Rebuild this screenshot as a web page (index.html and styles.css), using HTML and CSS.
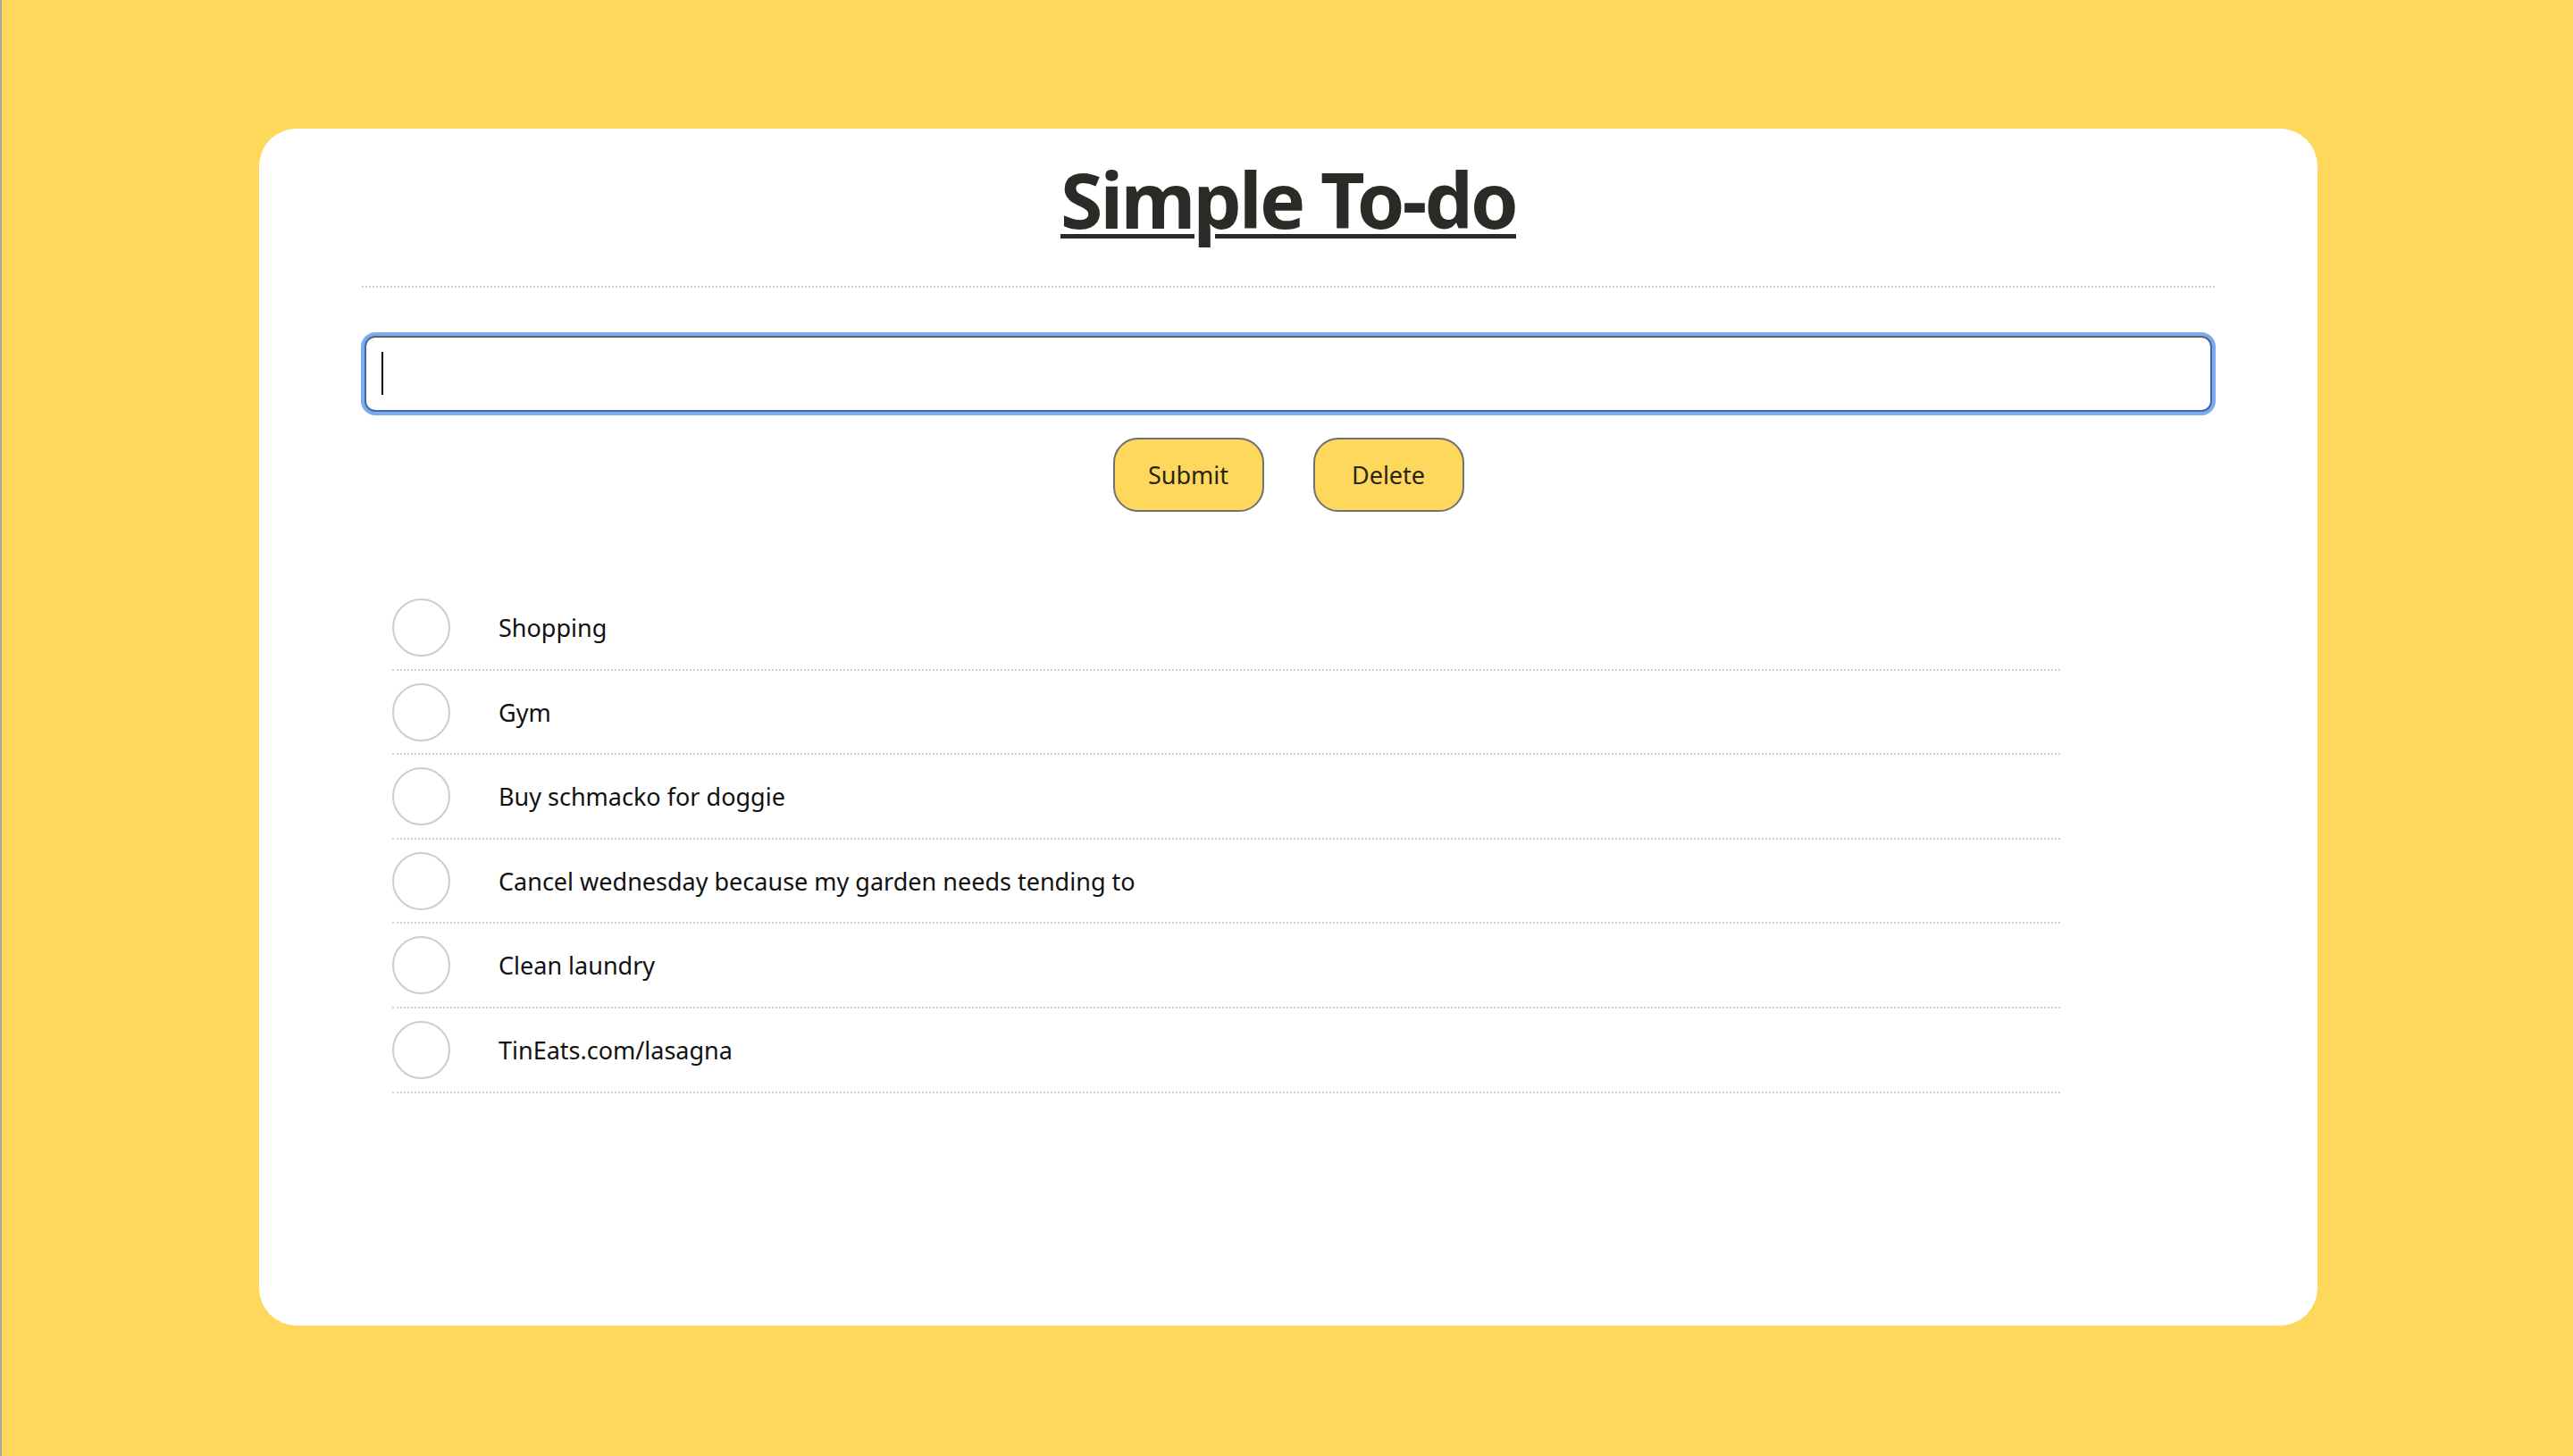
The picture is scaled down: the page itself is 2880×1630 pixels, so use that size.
FILE: index.html
```html
<!DOCTYPE html>
<html lang="en">
<head>
<meta charset="utf-8">
<title>Simple To-do</title>
<link rel="stylesheet" href="styles.css">
</head>
<body>
<main class="card">
  <h1 class="title">Simple To-do</h1>
  <div class="rule"></div>
  <div class="field">
    <input class="todo-input" type="text" aria-label="New to-do">
    <span class="caret"></span>
  </div>
  <div class="actions">
    <button class="btn" type="button">Submit</button>
    <button class="btn" type="button">Delete</button>
  </div>
  <ul class="list">
    <li class="item"><span class="check"></span><span class="label">Shopping</span></li>
    <li class="item"><span class="check"></span><span class="label">Gym</span></li>
    <li class="item"><span class="check"></span><span class="label">Buy schmacko for doggie</span></li>
    <li class="item"><span class="check"></span><span class="label">Cancel wednesday because my garden needs tending to</span></li>
    <li class="item"><span class="check"></span><span class="label">Clean laundry</span></li>
    <li class="item"><span class="check"></span><span class="label">TinEats.com/lasagna</span></li>
  </ul>
</main>
</body>
</html>
```

FILE: styles.css
```css
* { box-sizing: border-box; }

html, body {
  margin: 0;
  padding: 0;
}

body {
  background: #fed85d;
  font-family: "Noto Sans", "DejaVu Sans", sans-serif;
  color: #111;
  height: 1630px;
  overflow: hidden;
  padding-top: 144px;
  box-shadow: inset 2px 0 #a9a9a9;
}

.card {
  width: 2304px;
  height: 1340px;
  margin: 0 0 0 290px;
  background: #fff;
  border-radius: 42px;
  padding: 19px 115px 0;
}

.title {
  margin: 0;
  text-align: center;
  font-size: 86px;
  line-height: 120px;
  font-weight: 700;
  letter-spacing: -2.8px;
  color: #2c2a27;
  text-decoration: underline;
  text-decoration-thickness: 5px;
  text-underline-offset: 6px;
}

.rule {
  margin-top: 37px;
  border-top: 2px dotted #cfcfcf;
}

.field {
  position: relative;
  margin: 54px 3px 0;
}

.todo-input {
  display: block;
  width: 100%;
  height: 85px;
  border: 2px solid #3f6aaa;
  border-top-color: #5c6068;
  border-radius: 12px;
  box-shadow: 0 0 0 4px #7eabf0;
  outline: none;
  background: #fff;
  font: 40px "Noto Sans", sans-serif;
  padding: 0 18px;
}

.caret {
  position: absolute;
  left: 19px;
  top: 18px;
  width: 2px;
  height: 48px;
  background: #000;
}

.actions {
  display: flex;
  justify-content: center;
  gap: 55px;
  margin-top: 29px;
}

.btn {
  width: 169px;
  height: 83px;
  border: 2px solid #717171;
  border-radius: 28px;
  background: #fed85d;
  color: #2a2414;
  font-family: "Noto Sans", sans-serif;
  font-size: 27px;
  padding: 0;
}

.list {
  list-style: none;
  margin: 83px 0 0 34px;
  padding: 0;
  width: 90%;
}

.item {
  display: flex;
  align-items: center;
  gap: 54px;
  padding: 14px 0 13.6px;
  border-bottom: 2px dotted #d0d0d0;
}

.check {
  flex: none;
  width: 65px;
  height: 65px;
  border: 2px solid #cdcdcd;
  border-radius: 50%;
}

.label {
  font-size: 27px;
  line-height: 1;
  color: #111;
}
```
